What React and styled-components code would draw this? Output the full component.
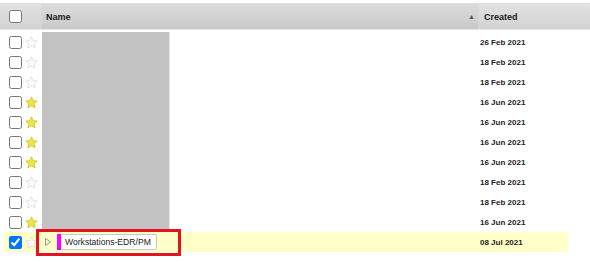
import React from "react";
import styled, { createGlobalStyle } from "styled-components";

const Global = createGlobalStyle`
  html, body { margin: 0; padding: 0; background: #fff; }
  body { font-family: "Liberation Sans", Arial, sans-serif; }
`;

const Page = styled.div`
  position: relative;
  width: 590px;
  height: 262px;
  padding-top: 3px;
  box-sizing: border-box;
  overflow: hidden;
`;

const Header = styled.div`
  display: grid;
  grid-template-columns: 41px 1fr 112px;
  height: 25px;
  border-top: 1px solid #e2e2e2;
  border-bottom: 1px solid #e6e6e6;
  background: linear-gradient(#dcdcdc, #c9c9c9);
`;

const HeadCell = styled.div`
  display: flex;
  align-items: center;
  font-size: 9px;
  font-weight: ${(p) => (p.$bold ? "bold" : "600")};
  color: #1a1a1a;
  padding-left: ${(p) => p.$pad || 0}px;
  background: ${(p) => (p.$light ? "linear-gradient(#e2e2e2, #d2d2d2)" : "transparent")};
  border-left: ${(p) => (p.$sep ? "1px solid #d8d8d8" : "none")};
`;

const NameHead = styled(HeadCell)`
  justify-content: space-between;
  padding-right: 3px;
`;

const SortArrow = styled.span`
  font-size: 7px;
  color: #555;
`;

const Check = styled.input.attrs({ type: "checkbox" })`
  width: 13px;
  height: 13px;
  margin: 0 0 0 ${(p) => p.$ml || 8}px;
  accent-color: #0075ff;
`;

const Body = styled.div`
  display: flex;
  flex-direction: column;
  padding-top: 2px;
`;

const Row = styled.div`
  display: grid;
  grid-template-columns: 37px 437px 1fr;
  height: 20px;
  margin: 0 22px 0 4px;
  background: ${(p) => (p.$selected ? "#ffffc8" : "transparent")};
`;

const CheckCell = styled.div`
  display: flex;
  align-items: center;
  gap: 3px;
`;

const NameCell = styled.div`
  display: flex;
  align-items: stretch;
  padding-left: 1px;
`;

const Redacted = styled.div`
  width: 127px;
  background: #c3c3c3;
  border-right: 1px solid #e4e4e4;
`;

const DateCell = styled.div`
  display: flex;
  align-items: center;
  padding-left: 2px;
  font-size: 8px;
  font-weight: bold;
  color: #222;
`;

const Folder = styled.div`
  display: flex;
  align-items: center;
  padding-left: 3px;
`;

const Twisty = styled.svg`
  width: 6px;
  height: 8px;
  margin-right: 6px;
`;

const ColorBar = styled.span`
  width: 4px;
  height: 16px;
  background: #ff00ff;
`;

const Label = styled.span`
  height: 14px;
  display: flex;
  align-items: center;
  padding: 0 5px 0 4px;
  border: 1px solid #c8c8c8;
  border-left: none;
  border-radius: 0 2px 2px 0;
  background: #fff;
  font-size: 8.6px;
  color: #222;
`;

const Annotation = styled.div`
  position: absolute;
  left: 36px;
  top: 229px;
  width: 145px;
  height: 27px;
  box-sizing: border-box;
  border: 3px solid #e3141e;
  pointer-events: none;
`;

function Star({ on }) {
  return (
    <svg width="13" height="13" viewBox="0 0 24 24">
      <path
        d="M12 1.5l3.2 7.1 7.6.7-5.8 5.1 1.8 7.6L12 18l-6.8 4 1.8-7.6-5.8-5.1 7.6-.7z"
        fill={on ? "#eee63c" : "#fafafa"}
        stroke={on ? "#c9c035" : "#dadada"}
        strokeWidth="1.4"
        strokeLinejoin="round"
      />
    </svg>
  );
}

const rows = [
  { date: "26 Feb 2021", star: false },
  { date: "18 Feb 2021", star: false },
  { date: "18 Feb 2021", star: false },
  { date: "16 Jun 2021", star: true },
  { date: "16 Jun 2021", star: true },
  { date: "16 Jun 2021", star: true },
  { date: "16 Jun 2021", star: true },
  { date: "18 Feb 2021", star: false },
  { date: "18 Feb 2021", star: false },
  { date: "16 Jun 2021", star: true },
];

export default function App() {
  return (
    <Page>
      <Global />
      <Header>
        <HeadCell $light>
          <Check $ml={9} readOnly />
        </HeadCell>
        <NameHead $pad={4} $sep $bold>
          <span>Name</span>
          <SortArrow>▲</SortArrow>
        </NameHead>
        <HeadCell $pad={5} $light $sep>
          Created
        </HeadCell>
      </Header>
      <Body>
        {rows.map((r, i) => (
          <Row key={i}>
            <CheckCell>
              <Check $ml={5} readOnly />
              <Star on={r.star} />
            </CheckCell>
            <NameCell>
              <Redacted />
            </NameCell>
            <DateCell>{r.date}</DateCell>
          </Row>
        ))}
        <Row $selected>
          <CheckCell>
            <Check $ml={5} checked readOnly />
            <Star on={false} />
          </CheckCell>
          <NameCell>
            <Folder>
              <Twisty viewBox="0 0 6 8">
                <path d="M0.5 0.5 L5.5 4 L0.5 7.5 Z" fill="none" stroke="#999" strokeWidth="1" />
              </Twisty>
              <ColorBar />
              <Label>Workstations-EDR/PM</Label>
            </Folder>
          </NameCell>
          <DateCell>08 Jul 2021</DateCell>
        </Row>
      </Body>
      <Annotation />
    </Page>
  );
}
